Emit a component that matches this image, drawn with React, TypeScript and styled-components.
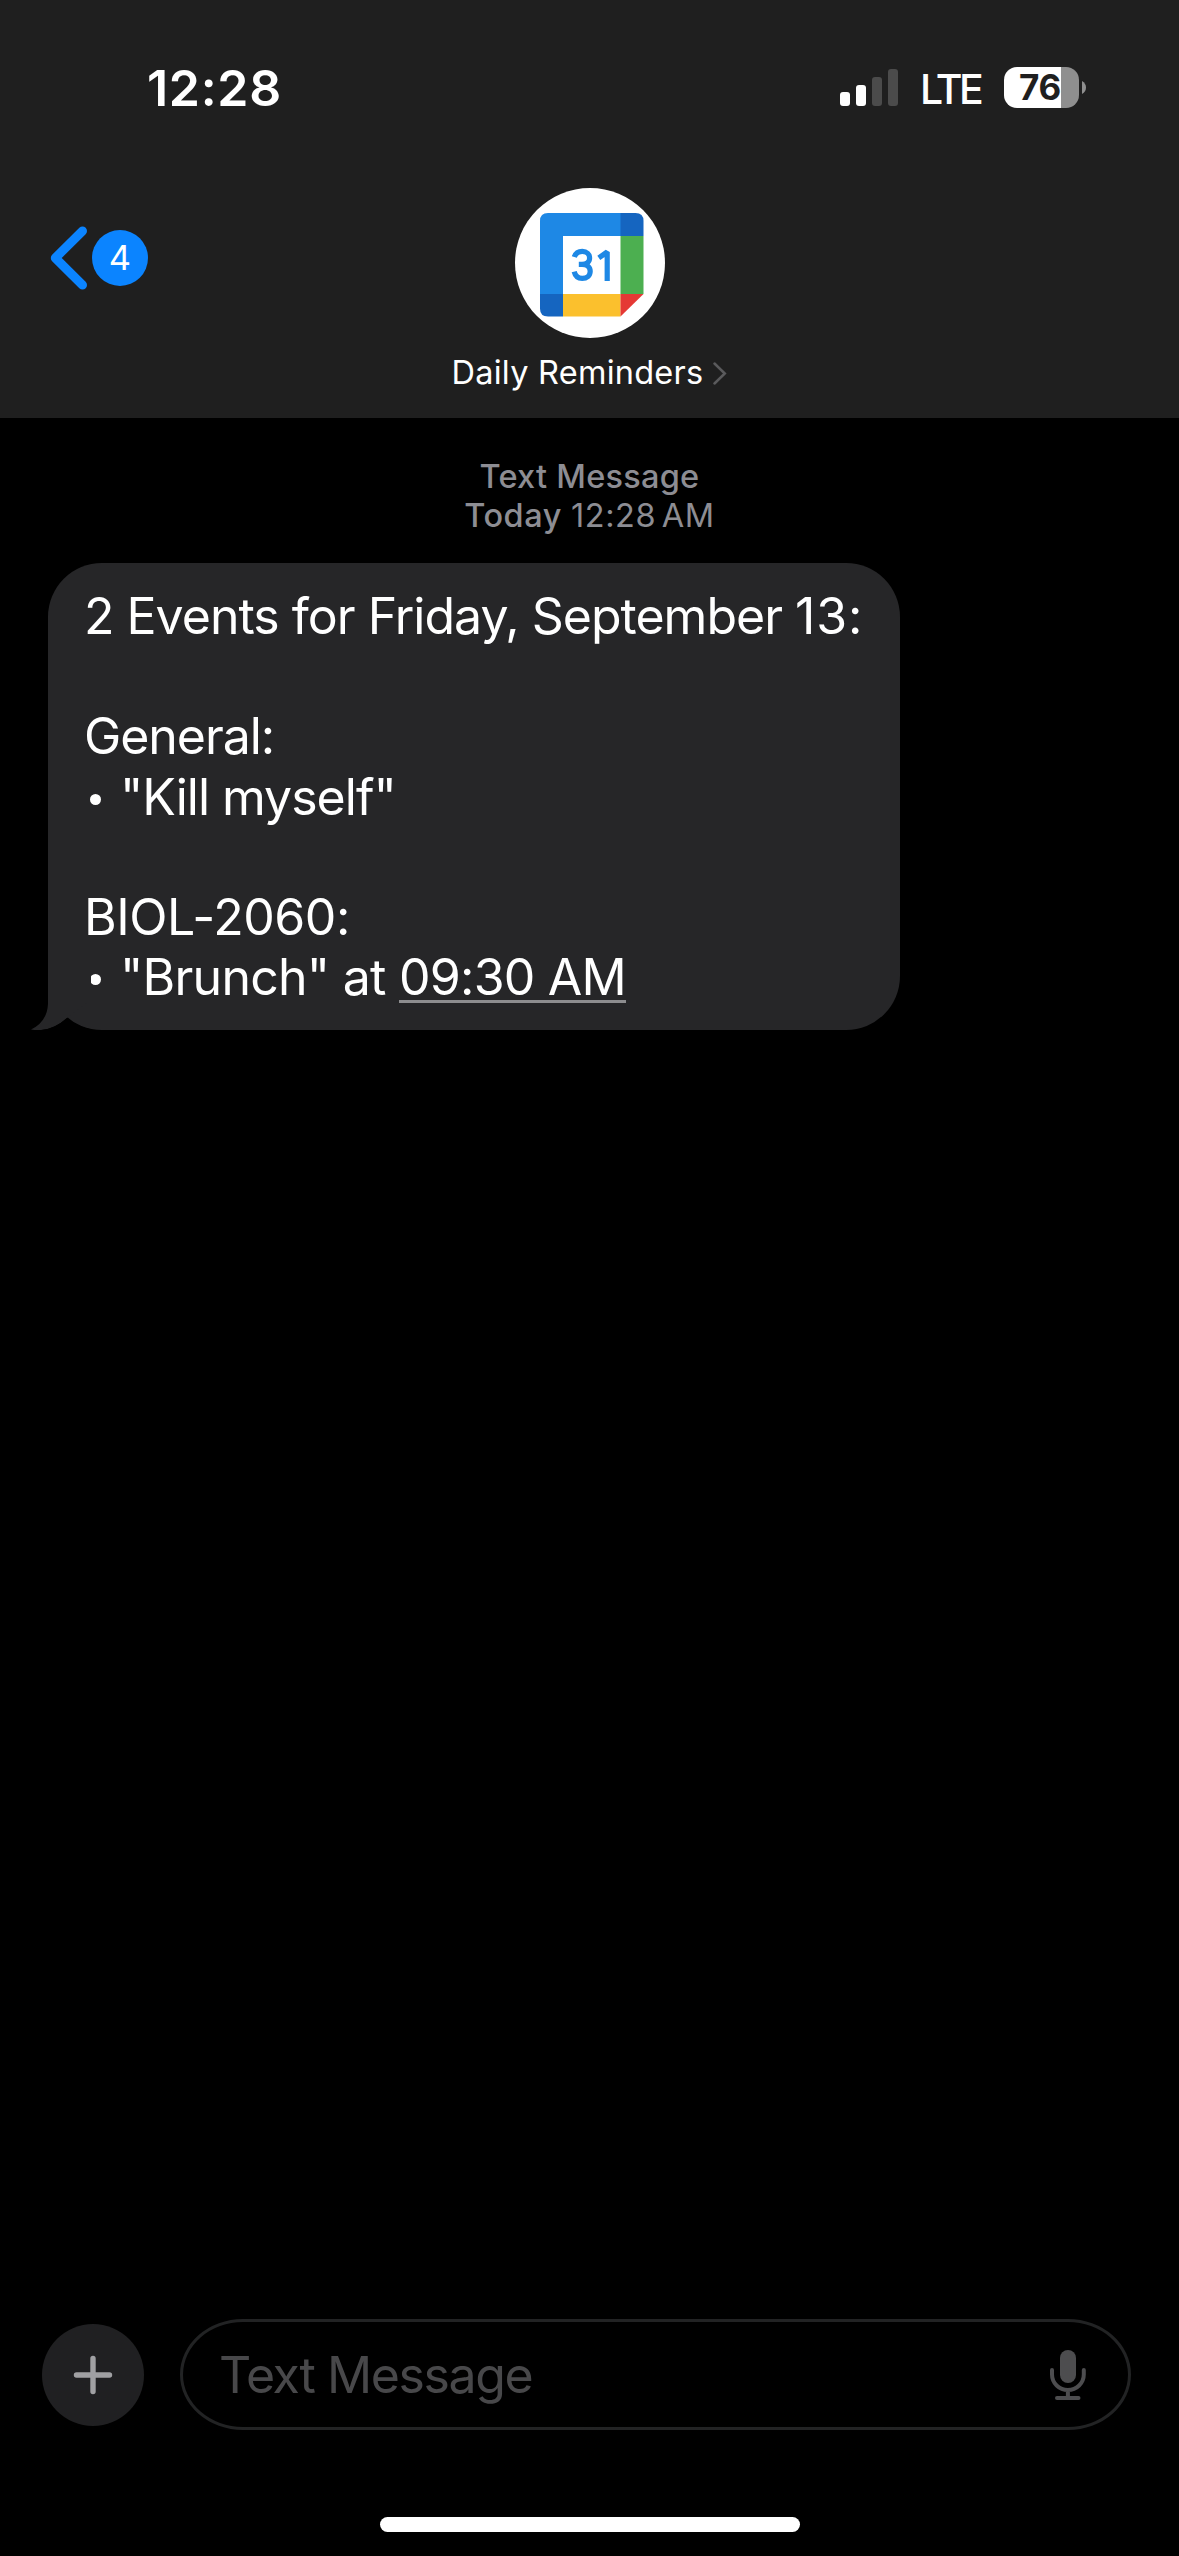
import React from 'react';
import styled, { createGlobalStyle } from 'styled-components';

const GlobalStyle = createGlobalStyle`
  html, body { margin: 0; padding: 0; background: #000; }
  * { box-sizing: border-box; }
`;

const Screen = styled.div`
  display: flex;
  flex-direction: column;
  width: 1179px;
  height: 2556px;
  overflow: hidden;
  background: #000;
  color: #fff;
  font-family: Inter, "Liberation Sans", sans-serif;
`;

const Label = styled.span<{
  $size: number;
  $line: number;
  $weight?: number;
  $spacing?: number;
  $color?: string;
}>`
  display: block;
  white-space: pre;
  font-size: ${(p) => p.$size}px;
  line-height: ${(p) => p.$line}px;
  font-weight: ${(p) => p.$weight ?? 400};
  letter-spacing: ${(p) => p.$spacing ?? 0}px;
  color: ${(p) => p.$color ?? 'inherit'};
`;

const Header = styled.header`
  display: flex;
  flex-direction: column;
  height: 418px;
  background: #1f1f1f;
`;

const StatusBar = styled.div`
  display: flex;
  justify-content: space-between;
  height: 188px;
  padding: 58px 93px 0 147px;
`;

const StatusIcons = styled.div`
  display: flex;
  align-items: flex-start;
`;

const SignalBars = styled.div`
  display: flex;
  align-items: flex-end;
  gap: 6px;
  height: 48px;
`;

const SignalBar = styled.div<{ $height: number; $active: boolean }>`
  width: 10px;
  height: ${(p) => p.$height}px;
  border-radius: 3px;
  background: ${(p) => (p.$active ? '#fff' : '#4b4b4b')};
`;

const Network = styled.div`
  width: 106px;
  padding-left: 22px;
`;

const Battery = styled.div`
  display: flex;
  align-items: center;
  width: 75px;
  height: 41px;
  margin-top: 9px;
  padding-left: 15px;
  border-radius: 13px;
  background: linear-gradient(to right, #fff 57px, #8f8f8f 57px);
`;

const BatteryNub = styled.svg`
  display: block;
  width: 4px;
  height: 13px;
  margin: 23px 0 0 3px;
`;

const NavRow = styled.div`
  display: grid;
  grid-template-columns: 1fr auto 1fr;
`;

const BackButton = styled.div`
  display: flex;
  align-items: center;
  height: 64px;
  margin: 37.5px 0 0 50px;
`;

const UnreadBadge = styled.div`
  display: flex;
  align-items: center;
  justify-content: center;
  width: 56px;
  height: 56px;
  margin-left: 5px;
  border-radius: 50%;
  background: #0b84ff;
`;

const Contact = styled.div`
  display: flex;
  flex-direction: column;
  align-items: center;
`;

const Avatar = styled.div`
  display: flex;
  width: 150px;
  height: 150px;
  padding: 25px 0 0 25px;
  border-radius: 50%;
  background: #fff;
`;

const ContactName = styled.div`
  display: flex;
  align-items: center;
  gap: 10px;
  margin-top: 15px;
`;

const Thread = styled.main`
  display: flex;
  flex: 1;
  flex-direction: column;
  padding-top: 39px;
`;

const Stamp = styled.div`
  display: flex;
  flex-direction: column;
  align-items: center;
  height: 106px;
`;

const StampLine = styled.div`
  display: flex;
`;

const StampTime = styled(Label)`
  word-spacing: -4px;
`;

const Bubble = styled.div`
  position: relative;
  width: 852px;
  height: 467px;
  margin-left: 48px;
  padding: 23px 0 0 36px;
  border-radius: 54px;
  background: #262628;
`;

const Tail = styled.svg`
  position: absolute;
  left: -17px;
  bottom: 0;
`;

const MessageLine = styled.div`
  display: flex;
  height: 60.2px;
`;

const Bullet = styled.span`
  flex: none;
  width: 11px;
  height: 11px;
  margin: 27px 19px 0 6px;
  border-radius: 50%;
  background: #fff;
`;

const TimeLink = styled.span`
  height: 56px;
  margin-left: 13.5px;
  border-bottom: 3px solid #8d8d8f;
`;

const Composer = styled.footer`
  display: flex;
  align-items: center;
  height: 111px;
  padding: 0 48px 0 42px;
`;

const AddButton = styled.div`
  display: flex;
  flex: none;
  align-items: center;
  justify-content: center;
  width: 102px;
  height: 102px;
  margin-right: 36px;
  border-radius: 50%;
  background: #202022;
`;

const MessageField = styled.div`
  display: flex;
  flex: 1;
  align-items: center;
  justify-content: space-between;
  height: 111px;
  padding: 0 42px 0 36px;
  border: 3px solid #222324;
  border-radius: 63px / 55.5px;
`;

const HomeArea = styled.div`
  display: flex;
  justify-content: center;
  height: 126px;
  padding-top: 87px;
`;

const HomeIndicator = styled.div`
  width: 420px;
  height: 15px;
  border-radius: 8px;
  background: #fff;
`;

const signal = [
  { height: 14, active: true },
  { height: 21, active: true },
  { height: 29, active: false },
  { height: 37, active: false },
];

function CalendarLogo() {
  return (
    <svg width="104" height="104" viewBox="0 0 104 104">
      <path d="M8 0H81V23H23V81H0V8Q0 0 8 0Z" fill="#1e88e5" />
      <path d="M80.500 0H95.500Q103.500 0 103.500 8V23H80.500Z" fill="#1565c0" />
      <path d="M80.500 23H103.500V81H80.500Z" fill="#4caf50" />
      <path d="M0 81H23V103.500H8Q0 103.500 0 95.500Z" fill="#1565c0" />
      <path d="M23 81H80.500V103.500H23Z" fill="#fbc02d" />
      <path d="M80.500 81H103.500L80.500 103.500Z" fill="#e53935" />
      <g fill="none" stroke="#1e88e5" strokeWidth="5.200">
        <path d="M34.300 44C35.500 40.500 38.500 38.400 42.300 38.400C46.800 38.400 49.600 41.300 49.600 45C49.600 49 46.600 51.400 42 51.400H38.800M42 51.400C47 51.400 50.200 54.200 50.200 58.300C50.200 62.600 46.800 65.400 42.200 65.400C38 65.400 35.200 63 34.200 58.700" />
        <path d="M67.200 68V39L58.800 44.800" strokeLinejoin="bevel" />
      </g>
    </svg>
  );
}

export default function App() {
  return (
    <>
      <GlobalStyle />
      <Screen>
        <Header>
          <StatusBar>
            <Label $size={50} $line={60} $weight={600} $spacing={0.7}>12:28</Label>
            <StatusIcons>
              <SignalBars>
                {signal.map((bar) => (
                  <SignalBar key={bar.height} $height={bar.height} $active={bar.active} />
                ))}
              </SignalBars>
              <Network>
                <Label $size={41} $line={62} $weight={500} $spacing={-3.6}>LTE</Label>
              </Network>
              <Battery>
                <Label $size={35} $line={41} $weight={700} $spacing={-0.3} $color="#1f1f1f">76</Label>
              </Battery>
              <BatteryNub viewBox="0 0 4 13">
                <path d="M0 0Q4 2.500 4 6.500T0 13Z" fill="#8f8f8f" />
              </BatteryNub>
            </StatusIcons>
          </StatusBar>
          <NavRow>
            <BackButton>
              <svg width="37" height="64" viewBox="0 0 37 64">
                <path d="M32.500 5L5.300 32L32.500 59" fill="none" stroke="#0b84ff" strokeWidth="9" strokeLinecap="round" strokeLinejoin="round" />
              </svg>
              <UnreadBadge>
                <Label $size={34.500} $line={56}>4</Label>
              </UnreadBadge>
            </BackButton>
            <Contact>
              <Avatar>
                <CalendarLogo />
              </Avatar>
              <ContactName>
                <Label $size={32.500} $line={40} $spacing={0.25}>Daily Reminders</Label>
                <svg width="14" height="23" viewBox="0 0 14 23">
                  <path d="M1.500 1.500L11.800 11.500L1.500 21.500" fill="none" stroke="#5a5a5c" strokeWidth="2.500" strokeLinecap="round" />
                </svg>
              </ContactName>
            </Contact>
          </NavRow>
        </Header>
        <Thread>
          <Stamp>
            <Label $size={32.500} $line={39} $weight={500} $spacing={0.25} $color="#8d8d93">Text Message</Label>
            <StampLine>
              <Label $size={32.500} $line={39} $weight={500} $spacing={0.5} $color="#8d8d93">Today </Label>
              <StampTime $size={32.500} $line={39} $spacing={0.55} $color="#8d8d93">12:28 AM</StampTime>
            </StampLine>
          </Stamp>
          <Bubble>
            <Tail width="60" height="70" viewBox="0 0 60 70">
              <path d="M17 0V44Q16 62 0 69.500Q19 73 36 58L60 40V0Z" fill="#262628" />
              <path d="M36 58Q50 70 70 70H10Q24 69 36 58Z" fill="#000" />
            </Tail>
            <MessageLine>
              <Label $size={50} $line={60} $spacing={-1}>2 Events for Friday, September </Label>
              <Label $size={50} $line={60} $spacing={0.8}>13:</Label>
            </MessageLine>
            <MessageLine />
            <MessageLine>
              <Label $size={50} $line={60} $spacing={-1.05}>General:</Label>
            </MessageLine>
            <MessageLine>
              <Bullet />
              <Label $size={50} $line={60} $spacing={-1}>"Kill myself"</Label>
            </MessageLine>
            <MessageLine />
            <MessageLine>
              <Label $size={50} $line={60} $spacing={-0.45}>BIOL-2060:</Label>
            </MessageLine>
            <MessageLine>
              <Bullet />
              <Label $size={50} $line={60} $spacing={-0.75}>"Brunch" at</Label>
              <TimeLink>
                <Label $size={50} $line={60} $spacing={-0.8}>09:30 AM</Label>
              </TimeLink>
            </MessageLine>
          </Bubble>
        </Thread>
        <Composer>
          <AddButton>
            <svg width="40" height="40" viewBox="0 0 40 40">
              <path d="M20 3.500V36.500M3.500 20H36.500" fill="none" stroke="#a0a0a3" strokeWidth="5.400" strokeLinecap="round" />
            </svg>
          </AddButton>
          <MessageField>
            <Label $size={50} $line={60} $spacing={-1.4} $color="#48484a">Text Message</Label>
            <svg width="36" height="50" viewBox="0 0 36 50">
              <rect x="10" y="0" width="16" height="33" rx="8" fill="#4d4d4f" />
              <path d="M2 20V24.500A15.900 15.500 0 0 0 33.800 24.500V20M17.900 40V48M7 48H28.500" fill="none" stroke="#4d4d4f" strokeWidth="4" strokeLinecap="round" />
            </svg>
          </MessageField>
        </Composer>
        <HomeArea>
          <HomeIndicator />
        </HomeArea>
      </Screen>
    </>
  );
}
